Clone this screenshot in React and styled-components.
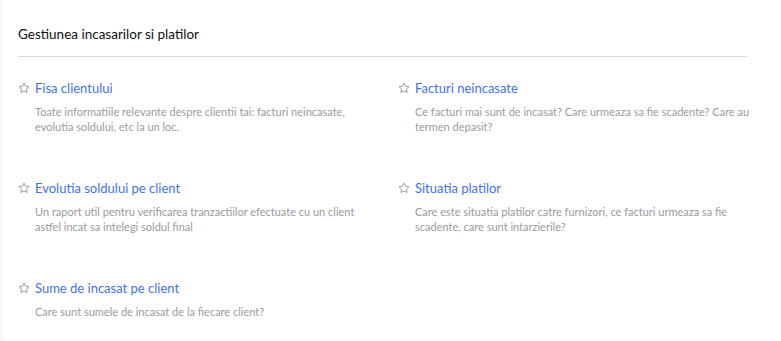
import React from "react";
import styled, { createGlobalStyle } from "styled-components";

const reports = [
  {
    title: "Fisa clientului",
    text: "Toate informatiile relevante despre clientii tai: facturi neincasate, evolutia soldului, etc la un loc."
  },
  {
    title: "Facturi neincasate",
    text: "Ce facturi mai sunt de incasat? Care urmeaza sa fie scadente? Care au termen depasit?"
  },
  {
    title: "Evolutia soldului pe client",
    text: "Un raport util pentru verificarea tranzactiilor efectuate cu un client astfel incat sa intelegi soldul final"
  },
  {
    title: "Situatia platilor",
    text: "Care este situatia platilor catre furnizori, ce facturi urmeaza sa fie scadente, care sunt intarzierile?"
  },
  {
    title: "Sume de incasat pe client",
    text: "Care sunt sumele de incasat de la fiecare client?"
  }
];

const GlobalStyle = createGlobalStyle`
  body {
    margin: 0;
    background: #ffffff;
    font-family: Lato, "Open Sans", sans-serif;
  }
`;

const Panel = styled.section`
  height: 341px;
  box-sizing: border-box;
  padding: 25px 34px 0 18px;
  background: #ffffff;
  box-shadow: inset 4px 0 4px -2px rgba(0, 0, 0, 0.04);
`;

const Heading = styled.h2`
  margin: 0;
  padding-bottom: 13px;
  font-size: 13.5px;
  font-weight: 400;
  line-height: 18px;
  color: #111111;
  border-bottom: 1px solid #d9d9d9;
`;

const Grid = styled.div`
  display: grid;
  grid-template-columns: 380px 1fr;
  row-gap: 46px;
  padding-top: 23px;
  margin-right: -6px;
`;

const Item = styled.div`
  display: flex;
  gap: 5px;
`;

const Star = styled.svg`
  flex: none;
  width: 12px;
  height: 12px;
  margin-top: 2px;
`;

const Body = styled.div`
  display: flex;
  flex-direction: column;
  gap: 8px;
`;

const Title = styled.a`
  font-size: 13px;
  line-height: 16px;
  color: #3f72ea;
  text-decoration: none;
  cursor: pointer;
`;

const Text = styled.p`
  margin: 0;
  max-width: 340px;
  font-size: 11px;
  line-height: 15px;
  color: #9b9a9e;
`;

const StarIcon = () => (
  <Star viewBox="0 0 24 24" fill="none" stroke="#a09ca0" strokeWidth="2" strokeLinejoin="round">
    <polygon points="12 2 15.09 8.26 22 9.27 17 14.14 18.18 21.02 12 17.77 5.82 21.02 7 14.14 2 9.27 8.91 8.26 12 2" />
  </Star>
);

export default function App() {
  return (
    <>
      <GlobalStyle />
      <Panel>
        <Heading>Gestiunea incasarilor si platilor</Heading>
        <Grid>
          {reports.map((report) => (
            <Item key={report.title}>
              <StarIcon />
              <Body>
                <Title>{report.title}</Title>
                <Text>{report.text}</Text>
              </Body>
            </Item>
          ))}
        </Grid>
      </Panel>
    </>
  );
}
